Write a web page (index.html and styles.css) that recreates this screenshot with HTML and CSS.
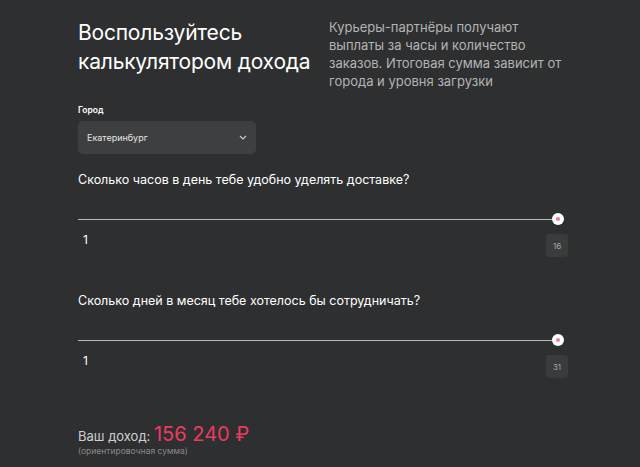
FILE: index.html
```html
<!DOCTYPE html>
<html lang="ru">
<head>
	<meta charset="utf-8">
	<title>Калькулятор дохода</title>
	<link rel="stylesheet" href="styles.css">
</head>
<body>
	<main class="calc">
		<header class="calc-head">
			<h2>Воспользуйтесь калькулятором дохода</h2>
			<p>Курьеры-партнёры получают выплаты за часы и количество заказов. Итоговая сумма зависит от города и уровня загрузки</p>
		</header>

		<section class="city">
			<label>Город</label>
			<div class="select">
				<span>Екатеринбург</span>
				<svg width="8" height="5" viewBox="0 0 8 5"><path d="M1 1l3 3 3-3" fill="none" stroke="#c8c8c8" stroke-width="1.2"/></svg>
			</div>
		</section>

		<section class="range">
			<h4>Сколько часов в день тебе удобно уделять доставке?</h4>
			<div class="track"><span class="thumb"></span></div>
			<div class="range-values">
				<span class="min">1</span>
				<span class="max">16</span>
			</div>
		</section>

		<section class="range">
			<h4>Сколько дней в месяц тебе хотелось бы сотрудничать?</h4>
			<div class="track"><span class="thumb"></span></div>
			<div class="range-values">
				<span class="min">1</span>
				<span class="max">31</span>
			</div>
		</section>

		<footer class="income">
			<p class="total">Ваш доход: <strong>156 240 ₽</strong></p>
			<small>(ориентировочная сумма)</small>
		</footer>
	</main>
</body>
</html>
```

FILE: styles.css
```css
body {
	margin: 0;
	background: #2e2f31;
	color: #fff;
	font-family: Inter, "Noto Sans", sans-serif;
}
.calc {
	padding: 18px 72px 0 78px;
}
.calc-head {
	display: flex;
}
.calc-head h2 {
	width: 252px;
	margin: 0;
	font-size: 21px;
	font-weight: 400;
	line-height: 29px;
	letter-spacing: -0.2px;
}
.calc-head p {
	margin: 0;
	width: 240px;
	font-size: 13px;
	line-height: 18px;
	color: #b4b4b4;
}

.city {
	margin-top: 15px;
}
.city label {
	display: block;
	font-size: 8.5px;
	font-weight: 600;
	margin-bottom: 6px;
}
.select {
	display: flex;
	align-items: center;
	justify-content: space-between;
	width: 178px;
	height: 33px;
	padding: 0 9px;
	box-sizing: border-box;
	background: #3e3f41;
	border-radius: 5px;
	font-size: 9px;
	color: #e6e6e6;
}

.range h4 {
	margin: 18px 0 0;
	font-size: 12.5px;
	font-weight: 400;
}
.range + .range h4 {
	margin-top: 36px;
}
.track {
	position: relative;
	margin-top: 32px;
	height: 1px;
	background: #b9b9b9;
	margin-right: 10px;
}
.thumb {
	position: absolute;
	right: -6px;
	top: -6px;
	width: 12px;
	height: 12px;
	border-radius: 50%;
	background: #fff;
}
.thumb::after {
	content: "";
	position: absolute;
	left: 4px;
	top: 4px;
	width: 4px;
	height: 4px;
	border-radius: 50%;
	background: #f07b96;
}
.range-values {
	display: flex;
	justify-content: space-between;
	align-items: flex-start;
	margin-top: 12px;
}
.range-values .min {
	font-size: 12px;
	padding-left: 5px;
}
.range-values .max {
	width: 22px;
	height: 23px;
	margin-top: 2px;
	display: flex;
	align-items: center;
	justify-content: center;
	background: #3a3b3d;
	border-radius: 3px;
	font-size: 8px;
	color: #a8a8a8;
}

.income {
	margin-top: 44px;
}
.income .total {
	margin: 0;
	font-size: 13px;
	color: #cfcfcf;
}
.income strong {
	font-size: 20px;
	font-weight: 400;
	color: #eb3b5f;
}
.income small {
	display: block;
	font-size: 8.5px;
	color: #8a8a8a;
}
```
